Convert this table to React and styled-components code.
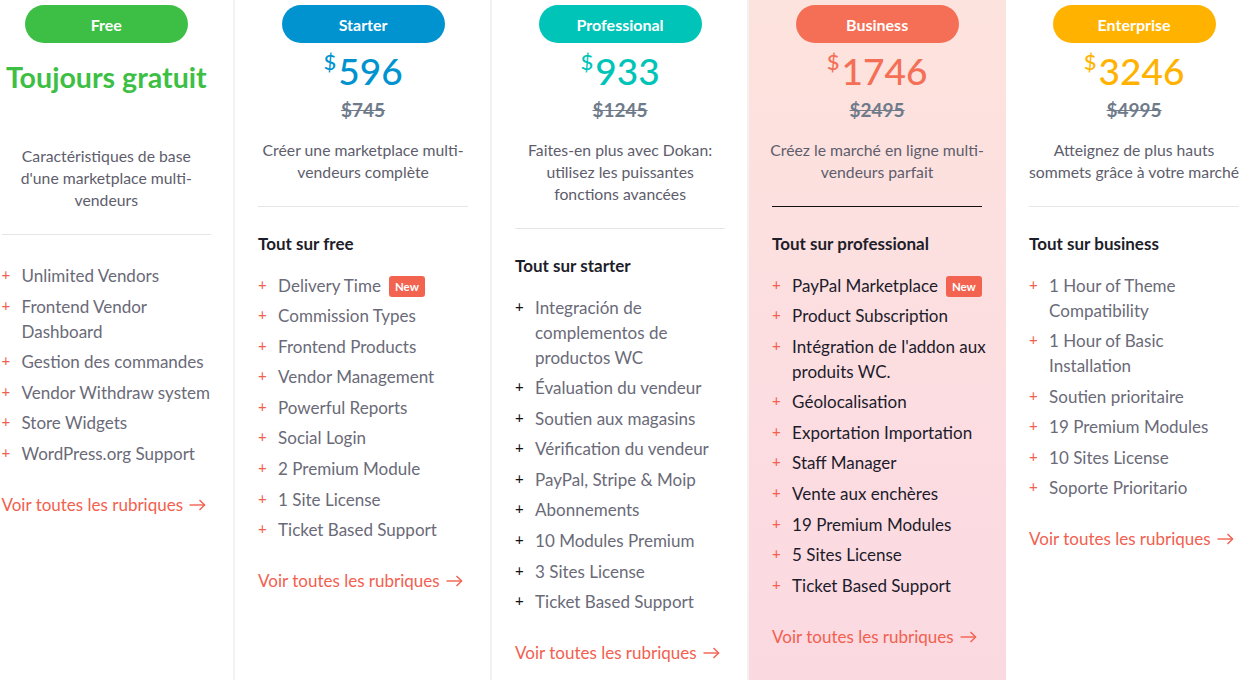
import React from 'react'
import styled, { createGlobalStyle } from 'styled-components'

const GlobalStyle = createGlobalStyle`
  html, body {
    margin: 0;
    padding: 0;
    background: #fff;
  }
  body {
    font-family: Lato, "Open Sans", "Liberation Sans", sans-serif;
    -webkit-font-smoothing: antialiased;
  }
`

const plans = [
  {
    name: 'Free',
    color: '#3dbf45',
    title: 'Toujours gratuit',
    desc: "Caractéristiques de base d'une marketplace multi-vendeurs",
    features: [
      'Unlimited Vendors',
      'Frontend Vendor Dashboard',
      'Gestion des commandes',
      'Vendor Withdraw system',
      'Store Widgets',
      'WordPress.org Support',
    ],
  },
  {
    name: 'Starter',
    color: '#0093cf',
    price: '596',
    old: '$745',
    desc: 'Créer une marketplace multi-vendeurs complète',
    heading: 'Tout sur free',
    features: [
      { text: 'Delivery Time', isNew: true },
      'Commission Types',
      'Frontend Products',
      'Vendor Management',
      'Powerful Reports',
      'Social Login',
      '2 Premium Module',
      '1 Site License',
      'Ticket Based Support',
    ],
  },
  {
    name: 'Professional',
    color: '#00c4b8',
    price: '933',
    old: '$1245',
    desc: 'Faites-en plus avec Dokan: utilisez les puissantes fonctions avancées',
    heading: 'Tout sur starter',
    darkPlus: true,
    features: [
      'Integración de complementos de productos WC',
      'Évaluation du vendeur',
      'Soutien aux magasins',
      'Vérification du vendeur',
      'PayPal, Stripe & Moip',
      'Abonnements',
      '10 Modules Premium',
      '3 Sites License',
      'Ticket Based Support',
    ],
  },
  {
    name: 'Business',
    color: '#f46f55',
    price: '1746',
    old: '$2495',
    desc: 'Créez le marché en ligne multi-vendeurs parfait',
    heading: 'Tout sur professional',
    featured: true,
    features: [
      { text: 'PayPal Marketplace', isNew: true },
      'Product Subscription',
      "Intégration de l'addon aux produits WC.",
      'Géolocalisation',
      'Exportation Importation',
      'Staff Manager',
      'Vente aux enchères',
      '19 Premium Modules',
      '5 Sites License',
      'Ticket Based Support',
    ],
  },
  {
    name: 'Enterprise',
    color: '#ffb300',
    price: '3246',
    old: '$4995',
    desc: 'Atteignez de plus hauts sommets grâce à votre marché',
    heading: 'Tout sur business',
    features: [
      '1 Hour of Theme Compatibility',
      '1 Hour of Basic Installation',
      'Soutien prioritaire',
      '19 Premium Modules',
      '10 Sites License',
      'Soporte Prioritario',
    ],
  },
]

const ArrowRight = () => (
  <svg width="17" height="12" viewBox="0 0 17 12" fill="none" stroke="currentColor" strokeWidth="1.4">
    <path d="M0.5 6H15.5" />
    <path d="M10.5 1L15.6 6L10.5 11" />
  </svg>
)

const PricingTable = () => {
  return (
    <Page>
      <GlobalStyle />
      <Row>
        {plans.map((plan) => (
          <Column key={plan.name} $featured={plan.featured}>
            <Pill $color={plan.color}>{plan.name}</Pill>
            {plan.title ? (
              <FreeTitle $color={plan.color}>{plan.title}</FreeTitle>
            ) : (
              <>
                <Price $color={plan.color}>
                  <sup>$</sup>
                  {plan.price}
                </Price>
                <OldPrice>{plan.old}</OldPrice>
              </>
            )}
            <Desc $free={!!plan.title}>{plan.desc}</Desc>
            <Divider $dark={plan.featured} />
            {plan.heading && <Heading>{plan.heading}</Heading>}
            <Features $noHeading={!plan.heading}>
              {plan.features.map((f) => {
                const item = typeof f === 'string' ? { text: f } : f
                return (
                  <Feature key={item.text} $featured={plan.featured}>
                    <Plus $dark={plan.darkPlus}>+</Plus>
                    <FeatureText>
                      {item.text}
                      {item.isNew && <NewBadge>New</NewBadge>}
                    </FeatureText>
                  </Feature>
                )
              })}
            </Features>
            <MoreLink href="#">
              Voir toutes les rubriques
              <ArrowRight />
            </MoreLink>
          </Column>
        ))}
      </Row>
    </Page>
  )
}

const Page = styled.div`
  width: 1240px;
  height: 680px;
  overflow: hidden;
  background: #fff;
`

const Row = styled.div`
  display: flex;
  margin-left: -21.5px;
  height: 680px;
`

const Column = styled.div`
  flex: 0 0 256.6px;
  box-sizing: border-box;
  padding: 5px 16px 0 23px;
  border-right: 2px solid ${(p) => (p.$featured ? 'transparent' : '#f2f2f2')};
  background: ${(p) =>
    p.$featured ? 'linear-gradient(180deg, #fde3dd 0%, #fcdde1 60%, #fbd9e1 100%)' : '#fff'};
  display: flex;
  flex-direction: column;
  align-items: stretch;
`

const Pill = styled.div`
  align-self: center;
  margin-right: 6px;
  width: 163px;
  height: 38px;
  border-radius: 19px;
  background: ${(p) => p.$color};
  color: #fff;
  font-weight: 700;
  font-size: 16px;
  display: flex;
  align-items: center;
  justify-content: center;
`

const FreeTitle = styled.div`
  margin: 14px 6px 0 0;
  line-height: 40px;
  font-size: 28.6px;
  font-weight: 700;
  text-align: center;
  color: ${(p) => p.$color};
`

const Price = styled.div`
  margin: 5px 6px 0 0;
  height: 46px;
  line-height: 46px;
  text-align: center;
  font-size: 37px;
  font-weight: 500;
  color: ${(p) => p.$color};
  sup {
    font-size: 22px;
    vertical-align: top;
    line-height: 1;
    position: relative;
    top: 3px;
    margin-right: 2px;
  }
`

const OldPrice = styled.div`
  margin: 4px 6px 0 0;
  line-height: 24px;
  text-align: center;
  font-size: 19px;
  font-weight: 700;
  color: #6f7b8a;
  text-decoration: line-through;
`

const Desc = styled.p`
  align-self: center;
  width: ${(p) => (p.$free ? '200px' : '216px')};
  margin: ${(p) => (p.$free ? '48px 6px 0 0' : '17px 3px 0 -3px')};
  font-size: 15.75px;
  line-height: 22px;
  text-align: center;
  color: #5e5d6c;
`

const Divider = styled.div`
  margin: 23px 6px 0 0;
  height: 1px;
  background: ${(p) => (p.$dark ? '#111' : '#e6e6e6')};
`

const Heading = styled.h4`
  margin: 26px 0 0;
  font-size: 17px;
  line-height: 22px;
  font-weight: 700;
  color: #1e1d2a;
`

const Features = styled.ul`
  list-style: none;
  margin: ${(p) => (p.$noHeading ? '28px' : '17.5px')} 0 0;
  padding: 0;
  display: flex;
  flex-direction: column;
  gap: 5.6px;
`

const Feature = styled.li`
  display: flex;
  font-size: 17px;
  line-height: 25px;
  color: ${(p) => (p.$featured ? '#1c1b2b' : '#6a6a78')};
`

const FeatureText = styled.span`
  flex: 1;
`

const Plus = styled.span`
  flex: 0 0 20px;
  font-size: 15px;
  line-height: 23px;
  color: ${(p) => (p.$dark ? '#111' : '#f0604e')};
`

const NewBadge = styled.span`
  display: inline-block;
  margin-left: 8px;
  padding: 0 6px;
  height: 21px;
  line-height: 21px;
  border-radius: 3px;
  background: #f26450;
  color: #fff;
  font-size: 11.5px;
  font-weight: 700;
  vertical-align: 1px;
`

const MoreLink = styled.a`
  margin-top: 26px;
  display: flex;
  align-items: center;
  gap: 6px;
  font-size: 17px;
  line-height: 25px;
  color: #f2604f;
  text-decoration: none;
  svg {
    margin-top: 1px;
  }
`

export default PricingTable
